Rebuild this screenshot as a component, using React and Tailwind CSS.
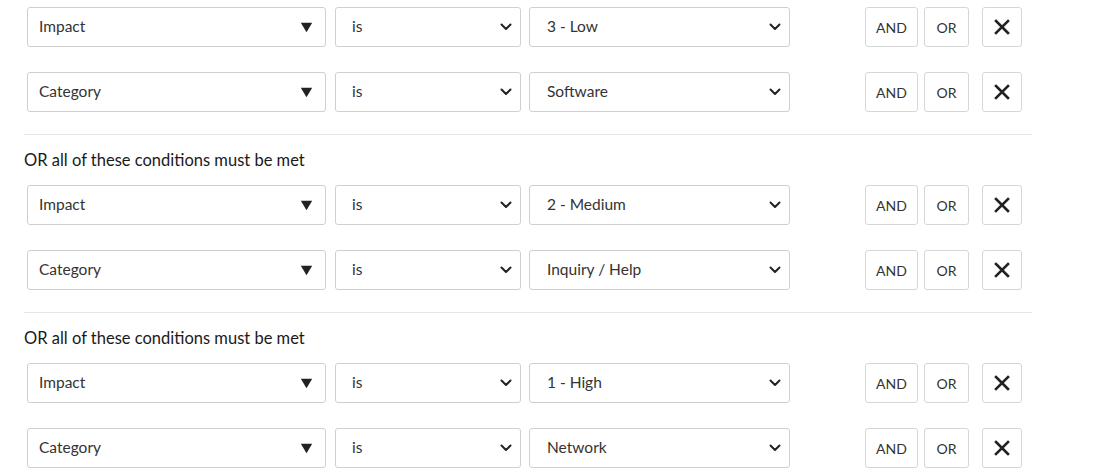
import React from "react";

const font = { fontFamily: "Lato, 'Open Sans', sans-serif" };

function Triangle() {
  return (
    <svg width="13" height="11" viewBox="0 0 13 11" className="shrink-0">
      <path d="M0.8 0.8 H12.2 L6.5 10.2 Z" fill="#222" />
    </svg>
  );
}

function Chevron() {
  return (
    <svg width="12" height="8" viewBox="0 0 12 8" className="shrink-0">
      <path d="M1.5 1.5 L6 6 L10.5 1.5" fill="none" stroke="#222" strokeWidth="2" strokeLinecap="round" strokeLinejoin="round" />
    </svg>
  );
}

function XIcon() {
  return (
    <svg width="16" height="16" viewBox="0 0 16 16">
      <path d="M2 2 L14 14 M14 2 L2 14" stroke="#222" strokeWidth="2.6" strokeLinecap="square" />
    </svg>
  );
}

function Row({ field, value }) {
  return (
    <div className="flex items-center h-[40px] text-[15.5px] text-[#333]">
      <div className="w-[299px] h-full border border-[#cfcfcf] rounded-[3px] flex items-center justify-between pl-[11px] pr-[12px]">
        <span>{field}</span>
        <Triangle />
      </div>
      <div className="ml-[9px] w-[186px] h-full border border-[#cfcfcf] rounded-[3px] flex items-center justify-between pl-[16px] pr-[4px]">
        <span>is</span>
        <span className="w-[20px] flex justify-center"><Chevron /></span>
      </div>
      <div className="ml-[8px] w-[261px] h-full border border-[#cfcfcf] rounded-[3px] flex items-center justify-between pl-[17px] pr-[4px]">
        <span>{value}</span>
        <span className="w-[20px] flex justify-center"><Chevron /></span>
      </div>
      <div className="ml-[75px] w-[53px] h-full border border-[#d6d6d6] rounded-[3px] flex items-center justify-center text-[14px]">AND</div>
      <div className="ml-[6px] w-[45px] h-full border border-[#d6d6d6] rounded-[3px] flex items-center justify-center text-[14px]">OR</div>
      <div className="ml-[13px] w-[40px] h-full border border-[#d6d6d6] rounded-[3px] flex items-center justify-center"><XIcon /></div>
    </div>
  );
}

function Group({ first, impact, category }) {
  return (
    <div>
      {!first && (
        <>
          <div className="h-px bg-[#e6e6e6] w-[1008px] mt-[22px]" />
          <div className="mt-[13px] mb-[13px] h-[24px] flex items-center text-[16.5px] text-[#1a1a1a]">
            OR all of these conditions must be met
          </div>
        </>
      )}
      <div className="pl-[3px] flex flex-col gap-[25px]">
        <Row field="Impact" value={impact} />
        <Row field="Category" value={category} />
      </div>
    </div>
  );
}

export default function App() {
  return (
    <div className="w-[1106px] h-[475px] bg-white overflow-hidden pl-[24px] pt-[7px]" style={font}>
      <Group first impact="3 - Low" category="Software" />
      <Group impact="2 - Medium" category="Inquiry / Help" />
      <Group impact="1 - High" category="Network" />
    </div>
  );
}
